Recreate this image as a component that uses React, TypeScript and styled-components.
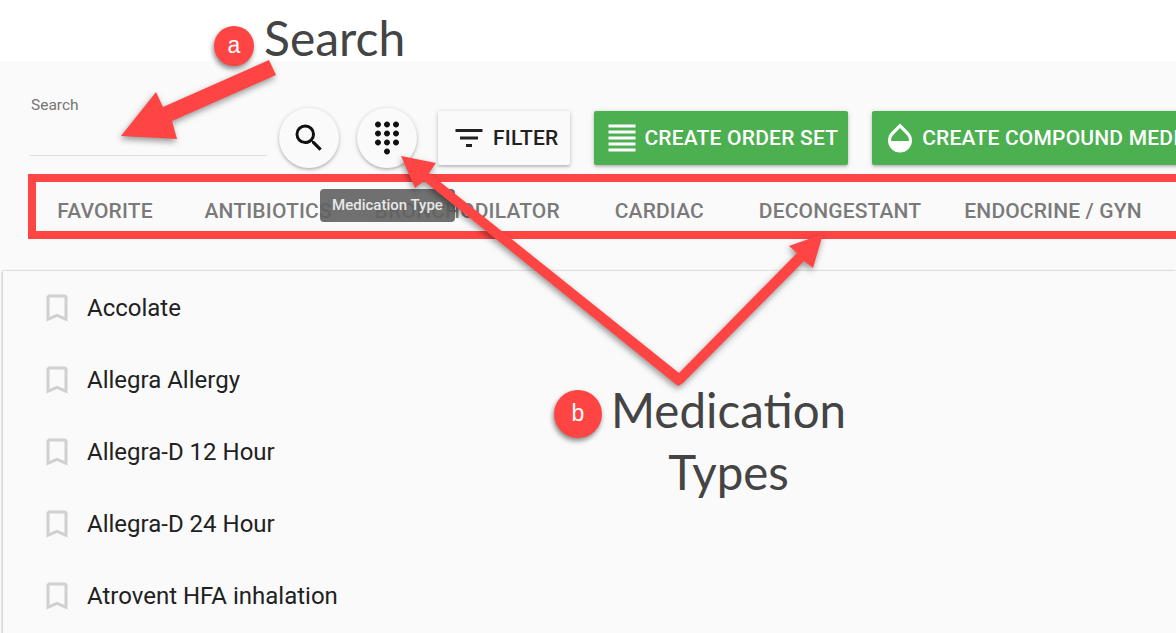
import styled, { createGlobalStyle } from "styled-components";
import {
  MdBookmarkBorder,
  MdDialpad,
  MdFilterList,
  MdFormatAlignJustify,
  MdOpacity,
  MdSearch,
} from "react-icons/md";

const GlobalStyle = createGlobalStyle`
  html, body {
    margin: 0;
    padding: 0;
    background: #fff;
    font-family: Roboto, "Liberation Sans", sans-serif;
  }
`;

const Page = styled.div`
  position: relative;
  width: 1176px;
  height: 633px;
  overflow: hidden;
  background: #fff;
`;

const Main = styled.main`
  margin-top: 61px;
  height: 572px;
  background: #fafafa;
`;

const Toolbar = styled.div`
  display: flex;
  align-items: flex-start;
  padding: 47px 0 0 30px;
`;

const SearchField = styled.label`
  display: block;
  flex: none;
  box-sizing: content-box;
  width: 236px;
  height: 58px;
  padding-left: 1px;
  border-bottom: 1px solid #ddd;
  color: #757575;
  font-size: 15.5px;
  line-height: 16px;
  margin-right: 12px;
  margin-top: -11px;
`;

const RoundButton = styled.button<{ $gap: number }>`
  flex: none;
  display: flex;
  align-items: center;
  justify-content: center;
  width: 60px;
  height: 60px;
  padding: 0;
  border: 0;
  border-radius: 50%;
  background: #fafafa;
  color: #111;
  margin-right: ${(p) => p.$gap}px;
  box-shadow: 0 1px 5px rgba(0, 0, 0, 0.2), 0 2px 2px rgba(0, 0, 0, 0.12);
  svg {
    width: 36px;
    height: 36px;
  }
`;

const ActionButton = styled.button<{ $green?: boolean }>`
  flex: none;
  display: flex;
  align-items: center;
  gap: ${(p) => (p.$green ? 4 : 6)}px;
  height: 54px;
  margin-top: 3px;
  margin-right: 24px;
  padding: 0 ${(p) => (p.$green ? 10 : 12)}px 0 ${(p) => (p.$green ? 10 : 13)}px;
  border: 0;
  border-radius: 2px;
  background: ${(p) => (p.$green ? "#4caf50" : "#fafafa")};
  color: ${(p) => (p.$green ? "#fff" : "#212121")};
  font-family: Roboto, sans-serif;
  font-size: 21px;
  font-weight: 500;
  letter-spacing: 0.2px;
  white-space: nowrap;
  box-shadow: 0 1px 5px rgba(0, 0, 0, 0.2), 0 2px 2px rgba(0, 0, 0, 0.12);
  svg {
    width: 36px;
    height: 36px;
    flex: none;
  }
`;

const Tabs = styled.nav`
  display: flex;
  height: 54px;
  margin-top: 16px;
  padding-left: 27px;
  white-space: nowrap;
`;

const Tab = styled.div`
  flex: none;
  box-sizing: border-box;
  min-width: 156px;
  padding: 0 21.5px;
  text-align: center;
  line-height: 54px;
  color: #7a7a7a;
  font-size: 21px;
  font-weight: 500;
  letter-spacing: 0.15px;
`;

const ListCard = styled.ul`
  margin: 33px 0 0 3px;
  padding: 1px 0 0;
  list-style: none;
  background: #fafafa;
  box-shadow: -1px 0 2px rgba(0, 0, 0, 0.22), 0 -1px 1px rgba(0, 0, 0, 0.04);
  height: 400px;
`;

const ListRow = styled.li`
  display: flex;
  align-items: center;
  gap: 12px;
  height: 72px;
  padding-left: 36px;
  color: #212121;
  font-size: 24px;
  svg {
    width: 36px;
    height: 36px;
    flex: none;
    color: #d0d0d0;
  }
`;

const Tooltip = styled.div`
  position: absolute;
  left: 320px;
  top: 189px;
  width: 135px;
  height: 33px;
  border-radius: 4px;
  background: rgba(97, 97, 97, 0.9);
  color: #e8e8e8;
  font-size: 15px;
  font-weight: 500;
  line-height: 32px;
  text-align: center;
`;

const HighlightBox = styled.div`
  position: absolute;
  left: 28px;
  top: 174px;
  width: 1200px;
  height: 49px;
  border: 8px solid #ff4444;
`;

const Arrows = styled.svg`
  position: absolute;
  left: 0;
  top: 0;
  width: 1176px;
  height: 633px;
  filter: drop-shadow(-1px 3px 3px rgba(0, 0, 0, 0.4));
`;

const Badge = styled.div<{ $x: number; $y: number; $size: number }>`
  position: absolute;
  left: ${(p) => p.$x}px;
  top: ${(p) => p.$y}px;
  width: ${(p) => p.$size}px;
  height: ${(p) => p.$size}px;
  border-radius: 50%;
  background: #ff4444;
  color: #fff;
  font-family: "Liberation Sans", sans-serif;
  font-size: 23px;
  line-height: ${(p) => p.$size - 2}px;
  text-align: center;
  box-shadow: -1px 3px 5px rgba(0, 0, 0, 0.45);
`;

const Note = styled.div<{ $x: number; $y: number; $size: number }>`
  position: absolute;
  left: ${(p) => p.$x}px;
  top: ${(p) => p.$y}px;
  color: #444;
  font-family: Lato, "Open Sans", sans-serif;
  font-size: ${(p) => p.$size}px;
  line-height: 62px;
  text-align: center;
  white-space: nowrap;
`;

const tabs = ["FAVORITE", "ANTIBIOTICS", "BRONCHODILATOR", "CARDIAC", "DECONGESTANT", "ENDOCRINE / GYN"];
const medications = ["Accolate", "Allegra Allergy", "Allegra-D 12 Hour", "Allegra-D 24 Hour", "Atrovent HFA inhalation"];

export default function App() {
  return (
    <Page>
      <GlobalStyle />
      <Main>
        <Toolbar>
          <SearchField>Search</SearchField>
          <RoundButton $gap={18}>
            <MdSearch />
          </RoundButton>
          <RoundButton $gap={21}>
            <MdDialpad />
          </RoundButton>
          <ActionButton>
            <MdFilterList />
            FILTER
          </ActionButton>
          <ActionButton $green>
            <MdFormatAlignJustify />
            CREATE ORDER SET
          </ActionButton>
          <ActionButton $green>
            <MdOpacity />
            CREATE COMPOUND MEDICATION
          </ActionButton>
        </Toolbar>
        <Tabs>
          {tabs.map((tab) => (
            <Tab key={tab}>{tab}</Tab>
          ))}
        </Tabs>
        <ListCard>
          {medications.map((name) => (
            <ListRow key={name}>
              <MdBookmarkBorder />
              {name}
            </ListRow>
          ))}
        </ListCard>
      </Main>

      <Tooltip>Medication Type</Tooltip>
      <HighlightBox />
      <Arrows viewBox="0 0 1176 633">
        <polygon
          fill="#ff4444"
          points="269,60 276,75 172,121 177,139 121,136 156,92 163,107"
        />
        <polygon
          fill="#ff4444"
          points="401,156 436,163 429,173 679,373 797,253 789,246 823,234 813,268 804,261 683,383 678,386 424,181 415,188"
        />
      </Arrows>
      <Badge $x={214} $y={26} $size={40}>
        a
      </Badge>
      <Note $x={264} $y={7} $size={48}>
        Search
      </Note>
      <Badge $x={554} $y={390} $size={48}>
        b
      </Badge>
      <Note $x={611} $y={379} $size={47.5}>
        Medication
        <br />
        Types
      </Note>
    </Page>
  );
}
